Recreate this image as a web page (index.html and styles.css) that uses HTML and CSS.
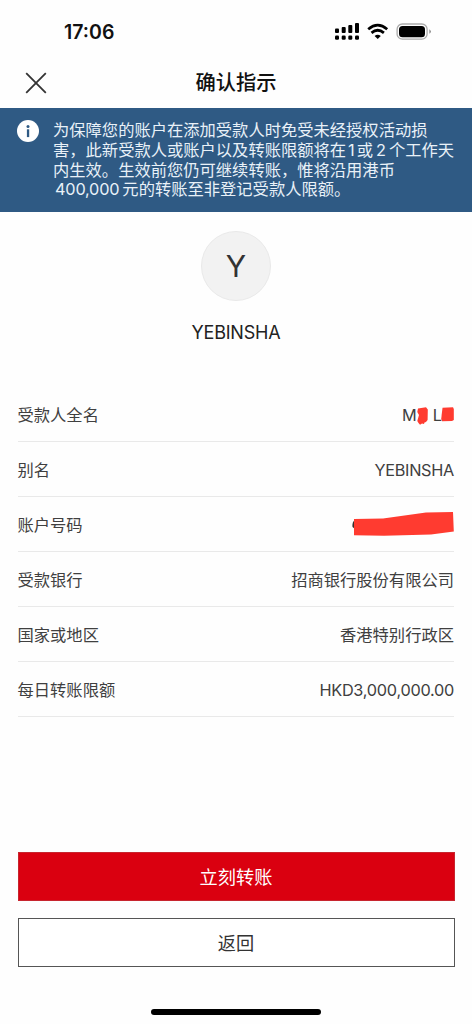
FILE: index.html
```html
<!DOCTYPE html>
<html lang="zh-CN">
<head>
<meta charset="utf-8">
<title>确认指示</title>
<link rel="stylesheet" href="styles.css">
</head>
<body>
<div class="screen">
  <div class="status">
    <span class="time">17:06</span>
    <svg class="status-icons" width="98" height="20" viewBox="0 0 98 20">
      <g fill="#000">
        <rect x="1" y="6.5" width="4" height="4.5" rx="1"/>
        <rect x="7.7" y="5" width="4" height="6" rx="1"/>
        <rect x="14.3" y="3" width="4" height="8" rx="1"/>
        <rect x="21" y="1" width="4" height="10" rx="1"/>
        <rect x="1" y="13.5" width="4" height="4.3" rx="1.3"/>
        <rect x="7.7" y="13.5" width="4" height="4.3" rx="1.3"/>
        <rect x="14.3" y="13.5" width="4" height="4.3" rx="1.3"/>
        <rect x="21" y="13.5" width="4" height="4.3" rx="1.3"/>
        <path d="M43.7 17 L40.6 14 Q43.7 11.3 46.8 14 Z"/>
        <rect x="65" y="4" width="26" height="11.2" rx="3.5"/>
        <path d="M95.4 7.2 Q98.4 9.5 95.4 11.8 Z" fill="#888"/>
      </g>
      <path d="M34.2 7.2 Q43.7 -0.8 53.2 7.2 M37.5 10.9 Q43.7 5.6 49.9 10.9" fill="none" stroke="#000" stroke-width="2.7"/>
      <rect x="63.1" y="2" width="30" height="15.2" rx="5.3" fill="none" stroke="#aaa" stroke-width="1.3"/>
    </svg>
  </div>
  <header class="nav">
    <svg class="close" width="22" height="22" viewBox="0 0 22 22"><path d="M1.2 1.2 20.8 20.8M20.8 1.2 1.2 20.8" stroke="#333" stroke-width="1.8"/></svg>
    <h1 class="title">确认指示</h1>
  </header>
  <section class="notice">
    <svg class="info" width="22" height="22" viewBox="0 0 22 22"><circle cx="11" cy="11" r="11" fill="#fff"/><circle cx="11" cy="6.4" r="1.5" fill="#2f5a84"/><rect x="9.9" y="9.3" width="2.3" height="7.8" fill="#2f5a84"/></svg>
    <p class="notice-text"><span class="line">为保障您的账户在添加受款人时免受未经授权活动损</span><span class="line">害，此新受款人或账户以及转账限额将在<span class="num">1</span>或<span class="num two">2</span>个工作天</span><span class="line">内生效。生效前您仍可继续转账，惟将沿用港币</span><span class="line"><span class="amount">400,000</span>元的转账至非登记受款人限额。</span></p>
  </section>
  <section class="profile">
    <div class="avatar">Y</div>
    <div class="name">YEBINSHA</div>
  </section>
  <dl class="details">
    <div class="row"><dt>受款人全名</dt><dd class="masked"><span>M</span><svg width="11" height="18" viewBox="0 0 11 18"><path d="M1 1.5 9 .3 10.8 2.5 10.6 13 9 15 7.5 15.5 7 17 5 16.5 3 17.7 1.5 16 .3 14 2 8 .3 5Z" fill="#ff3b30"/></svg><span class="initial">L</span><svg width="13" height="18" viewBox="0 0 13 18"><path d="M1.5.8 12 .2 12.8 2 12.8 13 11 14 1 14.3 .2 12Z" fill="#ff3b30"/></svg></dd></div>
    <div class="row"><dt>别名</dt><dd class="latin">YEBINSHA</dd></div>
    <div class="row"><dt>账户号码</dt><dd class="account"><svg width="103" height="26" viewBox="0 0 103 26"><path d="M4 9Q1 10.500 1.500 16L4 18Z" fill="#333"/><path d="M3 8 32 7.600 75 1.500 102 1 102.800 20.500 80 23.500 33 24.700 3 24.300Z" fill="#ff3b30"/></svg></dd></div>
    <div class="row"><dt>受款银行</dt><dd>招商银行股份有限公司</dd></div>
    <div class="row"><dt>国家或地区</dt><dd>香港特别行政区</dd></div>
    <div class="row"><dt>每日转账限额</dt><dd class="money">HKD3,000,000.00</dd></div>
  </dl>
  <div class="actions">
    <button class="btn primary">立刻转账</button>
    <button class="btn secondary">返回</button>
  </div>
  <div class="home"></div>
</div>
</body>
</html>
```
FILE: styles.css
```css
* { box-sizing: border-box; }
body { margin: 0; background: #fefefe; font-family: Inter, "Noto Sans CJK SC", sans-serif; color: #404040; }
.screen { width: 472px; height: 1024px; display: flex; flex-direction: column; overflow: hidden; }
.status { height: 60px; padding: 22px 40px 0 64px; display: flex; justify-content: space-between; align-items: flex-start; }
.time { font-size: 19.5px; line-height: 21px; font-weight: 600; color: #111; }
.nav { height: 48px; padding: 0 25px 3px; display: grid; grid-template-columns: 22px 1fr 22px; align-items: center; }
.close { display: block; }
.title { margin: 0; padding-top: 1px; text-align: center; font-size: 20.3px; line-height: 30px; font-weight: 500; color: #111; }
.notice { height: 104px; padding: 12px 17px; display: flex; gap: 13px; background: #2f5a84; color: #e9f1f8; }
.info { flex: none; }
.notice-text { margin: 0; padding: 1px 0 0 1px; font-size: 16.3px; line-height: 19.8px; white-space: nowrap; }
.line { display: block; }
.num { margin: 0 2px; }
.two { margin: 0 3px; }
.amount { margin: 0 3px 0 2px; letter-spacing: -0.2px; }
.profile { height: 179px; padding-top: 19px; display: flex; flex-direction: column; align-items: center; }
.avatar { width: 70px; height: 70px; border-radius: 50%; border: 1px solid #e9e9e9; background: #f2f2f2; display: flex; align-items: center; justify-content: center; font-size: 30px; color: #333; }
.name { margin-top: 20px; font-size: 18px; line-height: 24px; letter-spacing: -0.2px; color: #222; }
.details { margin: -4px 18px 0; font-size: 16.3px; }
.row { height: 55px; padding-top: 2px; border-bottom: 1px solid #e9e9e9; display: flex; justify-content: space-between; align-items: center; line-height: 24px; }
dt { margin-left: -0.5px; }
dd { margin: 0; }
.masked { display: flex; align-items: center; }
.masked svg { margin-top: 1px; }
.masked svg:last-child { margin-left: -1px; }
.initial { margin-left: 5px; }
.latin { letter-spacing: -0.3px; }
.money { letter-spacing: -0.27px; }
.account { display: flex; padding-bottom: 2px; }
.actions { margin: 135px 17.5px 0; display: flex; flex-direction: column; gap: 17px; }
.btn { height: 49px; padding: 0; border-radius: 0; font: 400 18.2px/26px Inter, "Noto Sans CJK SC", sans-serif; }
.primary { border: 1px solid #c7252e; background: #da0010; color: #fff; }
.secondary { border: 1px solid #555; background: #fff; color: #333; }
.home { width: 170px; height: 6px; border-radius: 3px; background: #000; margin: 42px auto 0; }
```
